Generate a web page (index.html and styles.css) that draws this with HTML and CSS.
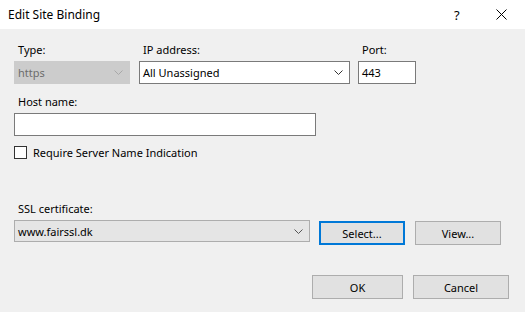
FILE: index.html
```html
<!DOCTYPE html>
<html lang="en">
<head>
    <meta charset="UTF-8">
    <title>Edit Site Binding</title>
    <link rel="stylesheet" href="styles.css">
</head>
<body>

<div class="dialog">
    <!-- title bar -->
    <div class="titlebar">
        <span class="title">Edit Site Binding</span>
        <span class="help">?</span>
        <svg class="close" width="11" height="11" viewBox="0 0 11 11">
            <path d="M0.5 0.5 L10.5 10.5 M10.5 0.5 L0.5 10.5" stroke="#000" stroke-width="1" fill="none"/>
        </svg>
    </div>

    <div class="content">
        <div class="row top-row">
            <div class="field type-field">
                <label>Type:</label>
                <div class="combo disabled">
                    <span>https</span>
                    <svg class="chev" width="9" height="5" viewBox="0 0 9 5"><path d="M0.5 0.5 L4.5 4.5 L8.5 0.5" stroke="#a8a8a8" fill="none"/></svg>
                </div>
            </div>
            <div class="field ip-field">
                <label>IP address:</label>
                <div class="combo">
                    <span>All Unassigned</span>
                    <svg class="chev" width="9" height="5" viewBox="0 0 9 5"><path d="M0.5 0.5 L4.5 4.5 L8.5 0.5" stroke="#333" fill="none"/></svg>
                </div>
            </div>
            <div class="field port-field">
                <label>Port:</label>
                <div class="textbox">443</div>
            </div>
        </div>

        <div class="field host-field">
            <label>Host name:</label>
            <div class="textbox"></div>
        </div>

        <div class="check-row">
            <span class="checkbox"></span>
            <span>Require Server Name Indication</span>
        </div>

        <div class="field ssl-field">
            <label>SSL certificate:</label>
            <div class="row">
                <div class="combo ssl-combo">
                    <span>www.fairssl.dk</span>
                    <svg class="chev" width="9" height="5" viewBox="0 0 9 5"><path d="M0.5 0.5 L4.5 4.5 L8.5 0.5" stroke="#555" fill="none"/></svg>
                </div>
                <button class="btn focused select-btn">Select...</button>
                <button class="btn view-btn">View...</button>
            </div>
        </div>

        <div class="footer">
            <button class="btn ok-btn">OK</button>
            <button class="btn cancel-btn">Cancel</button>
        </div>
    </div>
</div>

</body>
</html>
```

FILE: styles.css
```css
body {
    margin: 0;
    font-family: "Noto Sans", "Open Sans", sans-serif;
    font-size: 11px;
    color: #000;
    background-color: #f0f0f0;
}

.dialog {
    width: 525px;
    height: 312px;
    background-color: #f0f0f0;
}

/* title bar */
.titlebar {
    height: 29px;
    background-color: white;
    display: flex;
    align-items: center;
    padding-left: 8px;
}

.title {
    font-size: 12px;
    flex: 1;
}

.help {
    font-size: 13px;
    width: 10px;
    margin-right: 32px;
}

.close {
    margin-right: 18px;
}

.content {
    padding: 13px 0 0 14px;
}

.row {
    display: flex;
}

.field label {
    display: block;
    height: 16px;
    line-height: 16px;
    padding-left: 4px;
    margin-bottom: 3px;
}

.combo,
.textbox {
    box-sizing: border-box;
    height: 23px;
    border: 1px solid #7a7a7a;
    background-color: white;
    display: flex;
    align-items: center;
    padding-left: 3px;
}

.combo span {
    flex: 1;
}

.chev {
    margin-right: 6px;
}

.combo.disabled {
    background-color: #cccccc;
    border-color: #cccccc;
    color: #6d6d6d;
}

.type-field .combo {
    width: 116px;
}

.ip-field {
    margin-left: 9px;
}

.ip-field .combo {
    width: 211px;
}

.port-field {
    margin-left: 8px;
}

.port-field .textbox {
    width: 58px;
}

.host-field {
    margin-top: 10px;
}

.host-field .textbox {
    width: 302px;
}

.check-row {
    display: flex;
    align-items: center;
    height: 13px;
    margin-top: 10px;
}

.checkbox {
    box-sizing: border-box;
    width: 13px;
    height: 13px;
    border: 1px solid #333;
    background-color: white;
    margin-right: 6px;
}

.ssl-field {
    margin-top: 42px;
}

.ssl-field .row {
    align-items: flex-start;
}

.ssl-combo {
    width: 296px;
    height: 22px;
    background-color: #e5e5e5;
    border-color: #adadad;
}

.btn {
    box-sizing: border-box;
    height: 24px;
    background-color: #e1e1e1;
    border: 1px solid #adadad;
    font-family: inherit;
    font-size: 11px;
    color: #000;
    padding: 0;
}

.btn.focused {
    border: 2px solid #0078d7;
}

.select-btn {
    width: 86px;
    margin-left: 9px;
    margin-top: 1px;
}

.view-btn {
    width: 86px;
    margin-left: 10px;
    margin-top: 1px;
}

.footer {
    display: flex;
    margin-top: 30px;
    padding-left: 298px;
}

.ok-btn {
    width: 91px;
}

.cancel-btn {
    width: 96px;
    margin-left: 10px;
}
```
